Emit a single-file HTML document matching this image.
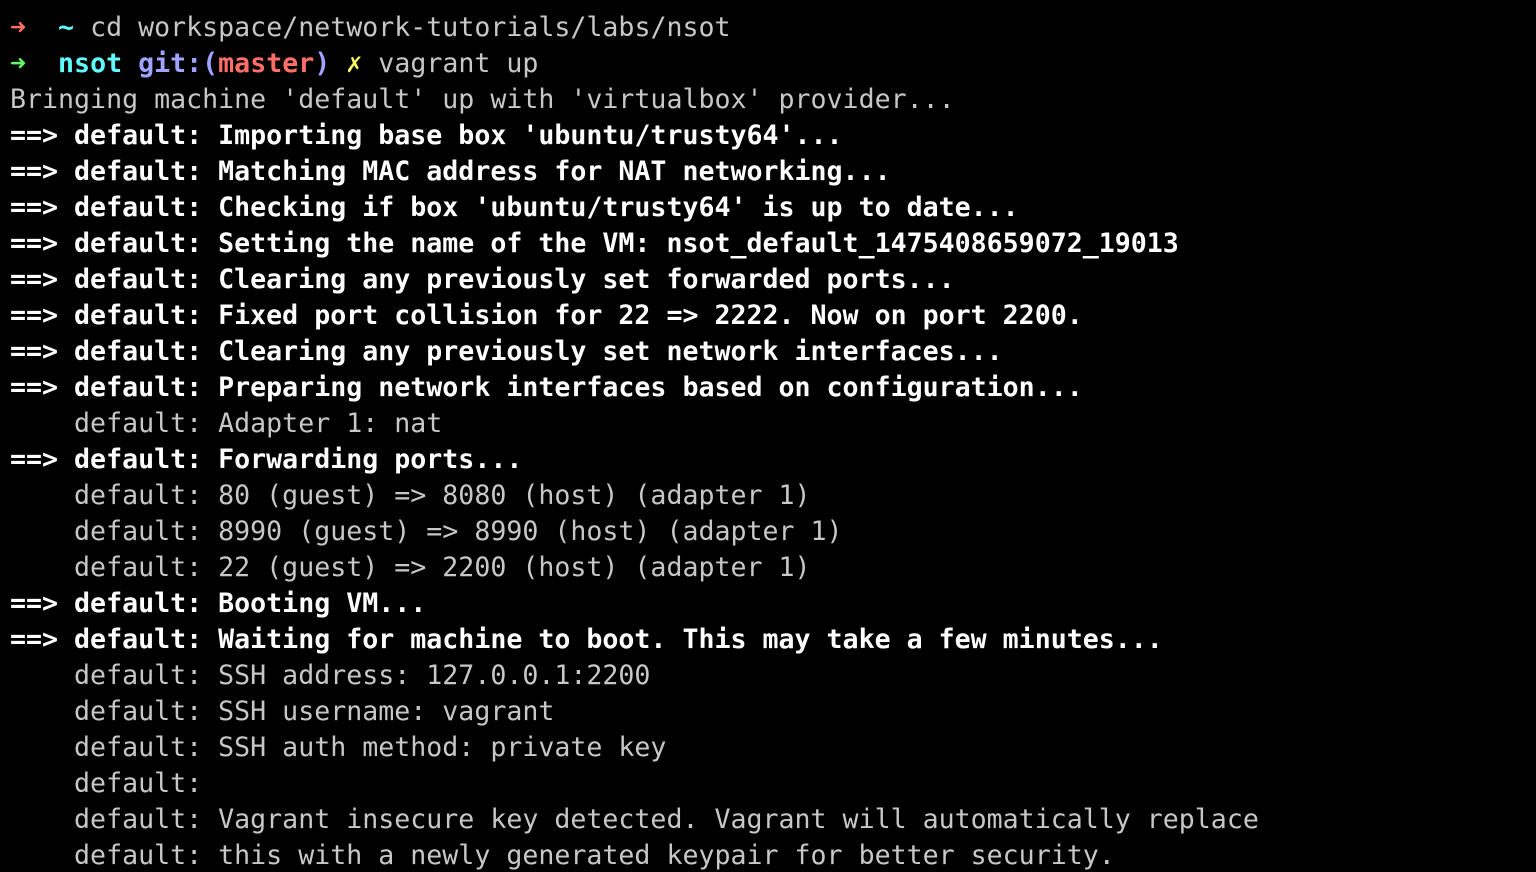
<!DOCTYPE html>
<html><head><style>
html,body{margin:0;background:#000;width:1536px;height:872px;overflow:hidden}
pre{margin:0;padding:10px 0 0 10px;font-family:"DejaVu Sans Mono","Liberation Mono",monospace;font-size:26.6px;line-height:36px;color:#c7c7c7;white-space:pre}
b{color:#fff;font-weight:bold}
.r{color:#ff6e67}.g{color:#5ffa68}.c{color:#5ffdff;font-weight:bold}.bl{color:#a0a3ff;font-weight:bold}.m{color:#ff6e67;font-weight:bold}.y{color:#fefb67;font-weight:bold}
</style></head><body><pre><span class="r">➜</span>  <span class="c">~</span> cd workspace/network-tutorials/labs/nsot
<span class="g">➜</span>  <span class="c">nsot</span> <span class="bl">git:(</span><span class="m">master</span><span class="bl">)</span> <span class="y">✗</span> vagrant up
Bringing machine 'default' up with 'virtualbox' provider...
<b>==&gt; default: Importing base box 'ubuntu/trusty64'...</b>
<b>==&gt; default: Matching MAC address for NAT networking...</b>
<b>==&gt; default: Checking if box 'ubuntu/trusty64' is up to date...</b>
<b>==&gt; default: Setting the name of the VM: nsot_default_1475408659072_19013</b>
<b>==&gt; default: Clearing any previously set forwarded ports...</b>
<b>==&gt; default: Fixed port collision for 22 =&gt; 2222. Now on port 2200.</b>
<b>==&gt; default: Clearing any previously set network interfaces...</b>
<b>==&gt; default: Preparing network interfaces based on configuration...</b>
    default: Adapter 1: nat
<b>==&gt; default: Forwarding ports...</b>
    default: 80 (guest) =&gt; 8080 (host) (adapter 1)
    default: 8990 (guest) =&gt; 8990 (host) (adapter 1)
    default: 22 (guest) =&gt; 2200 (host) (adapter 1)
<b>==&gt; default: Booting VM...</b>
<b>==&gt; default: Waiting for machine to boot. This may take a few minutes...</b>
    default: SSH address: 127.0.0.1:2200
    default: SSH username: vagrant
    default: SSH auth method: private key
    default:
    default: Vagrant insecure key detected. Vagrant will automatically replace
    default: this with a newly generated keypair for better security.
</pre></body></html>
